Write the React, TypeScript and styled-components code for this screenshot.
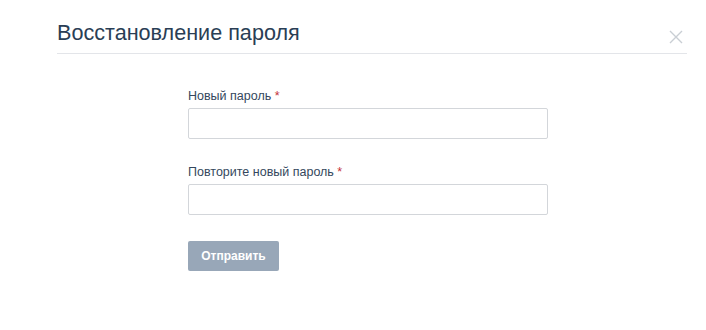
import React from 'react';
import styled, { createGlobalStyle } from 'styled-components';

const GlobalStyle = createGlobalStyle`
  body {
    margin: 0;
    background: #ffffff;
    font-family: "Liberation Sans", Arial, sans-serif;
  }
`;

const Modal = styled.div`
  width: 706px;
  height: 330px;
  box-sizing: border-box;
  padding: 18px 19px 0 57px;
`;

const Header = styled.div`
  display: flex;
  align-items: flex-start;
  justify-content: space-between;
  border-bottom: 1px solid #e3e5e9;
  height: 35px;
`;

const Title = styled.h2`
  margin: 0;
  font-size: 21.6px;
  font-weight: normal;
  line-height: 30px;
  color: #2a3e55;
`;

const CloseButton = styled.button`
  border: 0;
  background: none;
  padding: 0;
  margin: 12px 4px 0 0;
  width: 14px;
  height: 14px;
  cursor: pointer;
  display: flex;
`;

const Form = styled.form`
  display: flex;
  flex-direction: column;
  width: 360px;
  margin: 35px 0 0 131px;
`;

const Field = styled.div`
  display: flex;
  flex-direction: column;
  margin-bottom: 26px;
`;

const Label = styled.label`
  font-size: 12.5px;
  line-height: 15px;
  color: #34475d;
  margin-bottom: 4px;
`;

const Required = styled.span`
  color: #c4313a;
`;

const Input = styled.input`
  box-sizing: border-box;
  height: 31px;
  width: 360px;
  border: 1px solid #d3d6da;
  border-radius: 2px;
  padding: 0 8px;
  font-size: 13px;
  font-family: inherit;
  outline: none;
`;

const Submit = styled.button`
  align-self: flex-start;
  width: 91px;
  height: 30px;
  border: 0;
  border-radius: 2px;
  background: #98a7b8;
  color: #ffffff;
  font-family: inherit;
  font-size: 12px;
  font-weight: bold;
  cursor: pointer;
`;

const App: React.FC = () => (
  <>
    <GlobalStyle />
    <Modal>
      <Header>
        <Title>Восстановление пароля</Title>
        <CloseButton aria-label="Закрыть">
          <svg width="14" height="14" viewBox="0 0 14 14">
            <path d="M1 1L13 13M13 1L1 13" stroke="#c9ced4" strokeWidth="1.4" />
          </svg>
        </CloseButton>
      </Header>
      <Form onSubmit={(e) => e.preventDefault()}>
        <Field>
          <Label>
            Новый пароль <Required>*</Required>
          </Label>
          <Input type="password" />
        </Field>
        <Field>
          <Label>
            Повторите новый пароль <Required>*</Required>
          </Label>
          <Input type="password" />
        </Field>
        <Submit type="submit">Отправить</Submit>
      </Form>
    </Modal>
  </>
);

export default App;
